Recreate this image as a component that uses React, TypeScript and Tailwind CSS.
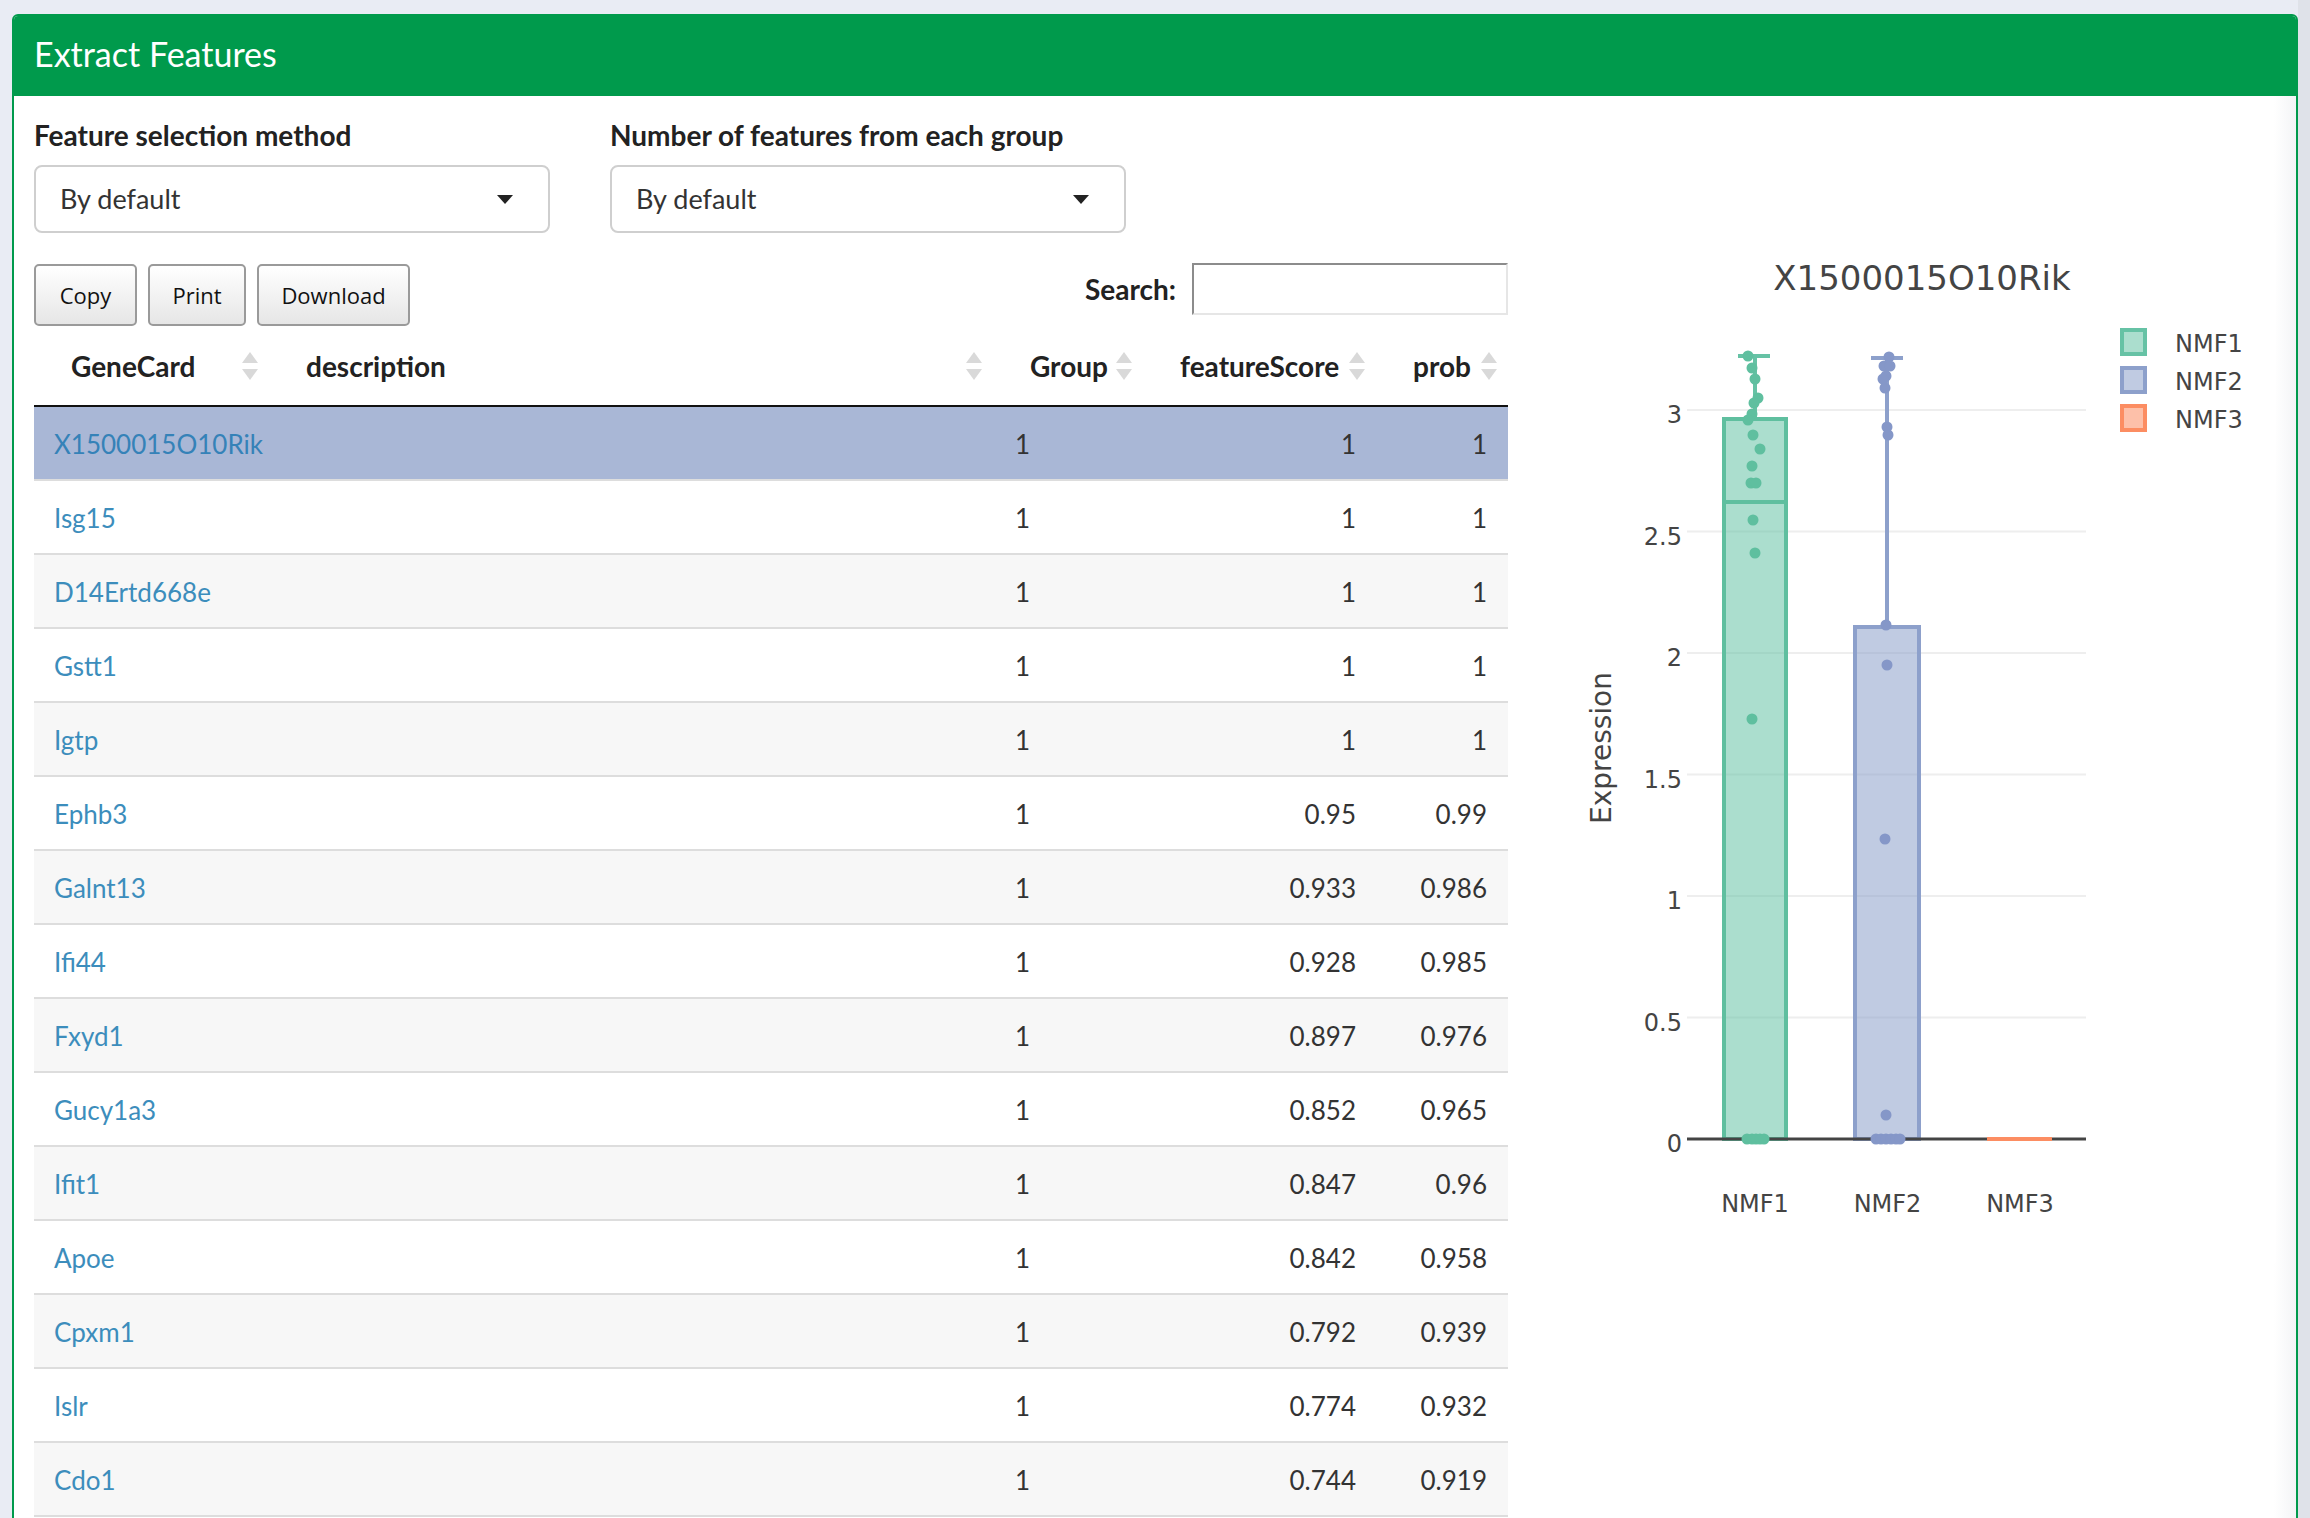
import React from "react";

const rows: [string, string, string, string, boolean][] = [
  ["X1500015O10Rik", "1", "1", "1", true],
  ["Isg15", "1", "1", "1", false],
  ["D14Ertd668e", "1", "1", "1", false],
  ["Gstt1", "1", "1", "1", false],
  ["Igtp", "1", "1", "1", false],
  ["Ephb3", "1", "0.95", "0.99", false],
  ["Galnt13", "1", "0.933", "0.986", false],
  ["Ifi44", "1", "0.928", "0.985", false],
  ["Fxyd1", "1", "0.897", "0.976", false],
  ["Gucy1a3", "1", "0.852", "0.965", false],
  ["Ifit1", "1", "0.847", "0.96", false],
  ["Apoe", "1", "0.842", "0.958", false],
  ["Cpxm1", "1", "0.792", "0.939", false],
  ["Islr", "1", "0.774", "0.932", false],
  ["Cdo1", "1", "0.744", "0.919", false],
];

const SortIcon = () => (
  <svg width="16" height="28" viewBox="0 0 16 28" className="shrink-0">
    <polygon points="8,0 16,11 0,11" fill="#d9d9d9" />
    <polygon points="0,17 16,17 8,28" fill="#d9d9d9" />
  </svg>
);

const Caret = () => (
  <svg width="16" height="9" viewBox="0 0 16 9">
    <polygon points="0,0 16,0 8,9" fill="#222" />
  </svg>
);

const Select = () => (
  <div className="w-[516px] h-[68px] border-2 border-[#cfcfcf] rounded-[8px] bg-white flex items-center justify-between pl-[24px] pr-[35px] text-[27px] text-[#333]">
    <span>By default</span>
    <Caret />
  </div>
);

const nmf1Pts: [number, number][] = [
  [1748, 357], [1752, 369], [1755, 380], [1758, 399], [1754, 404], [1752, 415], [1748, 421],
  [1753, 436], [1760, 450], [1752, 467], [1751, 484], [1756, 484], [1753, 521], [1755, 554],
  [1752, 720], [1747, 1140], [1752, 1140], [1756, 1140], [1760, 1140], [1764, 1140],
];
const nmf2Pts: [number, number][] = [
  [1889, 358], [1884, 367], [1890, 367], [1886, 377], [1883, 380], [1885, 389], [1887, 428],
  [1888, 436], [1886, 626], [1887, 666], [1885, 840], [1886, 1116], [1876, 1140], [1881, 1140],
  [1886, 1140], [1891, 1140], [1896, 1140], [1900, 1140],
];

const Plot = () => {
  const yOf = (v: number) => 1140 - v * 243;
  const ticks = [0.5, 1, 1.5, 2, 2.5, 3];
  const tickLabels = ["0", "0.5", "1", "1.5", "2", "2.5", "3"];
  const font = "'DejaVu Sans', Verdana, sans-serif";
  return (
    <svg
      width="738"
      height="1030"
      viewBox="1538 234 738 1030"
      className="shrink-0 -mt-[30px]"
      style={{ fontFamily: font }}
    >
      <rect x="1538" y="234" width="738" height="1030" fill="#fff" />
      <text x="1922" y="291" fontSize="34" fill="#444" textAnchor="middle">X1500015O10Rik</text>
      {ticks.map((t) => (
        <line key={t} x1="1687" x2="2086" y1={yOf(t)} y2={yOf(t)} stroke="#eeeeee" strokeWidth="2" />
      ))}
      {tickLabels.map((l, i) => (
        <text key={l} x="1682" y={yOf(i * 0.5) + 13} fontSize="24" fill="#444" textAnchor="end">{l}</text>
      ))}
      <text x="1611" y="749" fontSize="28" fill="#444" textAnchor="middle" transform="rotate(-90 1611 749)">Expression</text>
      {/* NMF1 box */}
      <line x1="1755" x2="1755" y1="357" y2="420" stroke="#66c2a5" strokeWidth="4" />
      <line x1="1738" x2="1770" y1="357" y2="357" stroke="#66c2a5" strokeWidth="4" />
      <rect x="1724" y="420" width="62" height="720" fill="#66c2a5" fillOpacity="0.55" stroke="#5fbf9f" strokeWidth="4" />
      <line x1="1724" x2="1786" y1="503" y2="503" stroke="#5fbf9f" strokeWidth="4" />
      {/* NMF2 box */}
      <line x1="1887" x2="1887" y1="359" y2="628" stroke="#8da0cb" strokeWidth="4" />
      <line x1="1871" x2="1903" y1="359" y2="359" stroke="#8da0cb" strokeWidth="4" />
      <rect x="1855" y="628" width="64" height="512" fill="#8da0cb" fillOpacity="0.55" stroke="#8da0cb" strokeWidth="4" />
      {/* zero line */}
      <line x1="1687" x2="2086" y1="1140" y2="1140" stroke="#444" strokeWidth="3" />
      {/* NMF3 */}
      <line x1="1987" x2="2052" y1="1140" y2="1140" stroke="#fc8d62" strokeWidth="4" />
      {nmf1Pts.map(([x, y], i) => (
        <circle key={"a" + i} cx={x} cy={y} r="5.5" fill="#5fbf9f" />
      ))}
      {nmf2Pts.map(([x, y], i) => (
        <circle key={"b" + i} cx={x} cy={y} r="5.5" fill="#8597c8" />
      ))}
      {["NMF1", "NMF2", "NMF3"].map((l, i) => (
        <text key={l} x={1755 + i * 132.5} y="1213" fontSize="24" fill="#444" textAnchor="middle">{l}</text>
      ))}
      {[
        ["NMF1", "#66c2a5"],
        ["NMF2", "#8da0cb"],
        ["NMF3", "#fc8d62"],
      ].map(([l, c], i) => (
        <g key={l}>
          <rect x="2122" y={331 + i * 38} width="23" height="24" fill={c} fillOpacity="0.55" stroke={c} strokeWidth="4" />
          <text x="2175" y={353 + i * 38} fontSize="24" fill="#444">{l}</text>
        </g>
      ))}
    </svg>
  );
};

export default function App() {
  return (
    <div
      className="w-[2310px] h-[1518px] overflow-hidden bg-[#e9ecf4] flex"
      style={{ fontFamily: "Lato, 'Liberation Sans', sans-serif" }}
    >
      <div className="pt-[14px] pl-[12px]">
        <div className="w-[2286px] h-[1600px] border-2 border-[#009a4c] rounded-t-[6px] bg-white flex flex-col overflow-hidden">
          <div className="h-[80px] shrink-0 bg-[#009a4c] flex items-center pl-[20px] pb-[5px] text-white text-[34px]">
            Extract Features
          </div>
          <div className="flex-1 pl-[20px] pr-[20px] pt-[19px] bg-[linear-gradient(90deg,#fff_calc(100%_-_22px),#f3f4f6_100%)]">
            {/* form row */}
            <div className="flex gap-[60px]">
              <div className="flex flex-col">
                <div className="h-[40px] leading-[40px] font-bold text-[28px] text-[#222] mb-[10px]">Feature selection method</div>
                <Select />
              </div>
              <div className="flex flex-col">
                <div className="h-[40px] leading-[40px] font-bold text-[28px] text-[#222] mb-[10px]">Number of features from each group</div>
                <Select />
              </div>
            </div>
            {/* main */}
            <div className="flex items-start gap-[30px] mt-[30px]">
              <div className="w-[1474px] shrink-0 flex flex-col">
                <div className="h-[62px] flex justify-between items-start">
                  <div className="flex gap-[11px] pt-[1px]" style={{ fontFamily: "'Open Sans', sans-serif" }}>
                    {[["Copy", "w-[103px]"], ["Print", "w-[98px]"], ["Download", "w-[153px]"]].map(([t, w]) => (
                      <div
                        key={t}
                        className={`${w} h-[62px] border-2 border-[#9a9a9a] rounded-[5px] bg-[linear-gradient(180deg,#ffffff_0%,#e6e6e6_100%)] flex items-center justify-center text-[22px] text-[#111]`}
                      >
                        {t}
                      </div>
                    ))}
                  </div>
                  <div className="flex items-center gap-[16px]">
                    <span className="font-bold text-[28px] text-[#222]">Search:</span>
                    <div className="w-[316px] h-[52px] bg-white border-2 border-t-[#8c8c8c] border-l-[#8c8c8c] border-r-[#e6e6e6] border-b-[#e6e6e6]" />
                  </div>
                </div>
                {/* header */}
                <div className="grid grid-cols-[235px_724px_150px_233px_132px] h-[82px] border-b-2 border-[#111] font-bold text-[28px] text-[#222]">
                  {["GeneCard", "description", "Group", "featureScore", "prob"].map((h) => (
                    <div key={h} className="flex items-center justify-between pl-[37px] pr-[11px] pt-[2px]">
                      <span>{h}</span>
                      <SortIcon />
                    </div>
                  ))}
                </div>
                {rows.map(([g, grp, fs, pr, sel], i) => (
                  <div
                    key={g}
                    className={`grid grid-cols-[235px_724px_150px_233px_132px] h-[74px] border-b-2 border-[#dddddd] items-center text-[26px] pt-[2px] ${
                      sel ? "bg-[#a9b7d6]" : i % 2 === 0 ? "bg-[#f7f7f7]" : "bg-white"
                    }`}
                  >
                    <div className={`pl-[20px] ${sel ? "text-[#3582b8]" : "text-[#3c8dbc]"}`}>{g}</div>
                    <div />
                    <div className="pl-[22px] text-[#333]">{grp}</div>
                    <div className="text-right pr-[20px] text-[#333]">{fs}</div>
                    <div className="text-right pr-[21px] text-[#333]">{pr}</div>
                  </div>
                ))}
              </div>
              <Plot />
            </div>
          </div>
        </div>
      </div>
      <div className="w-[12px] h-full bg-[#dfe2e9] shrink-0" />
    </div>
  );
}
